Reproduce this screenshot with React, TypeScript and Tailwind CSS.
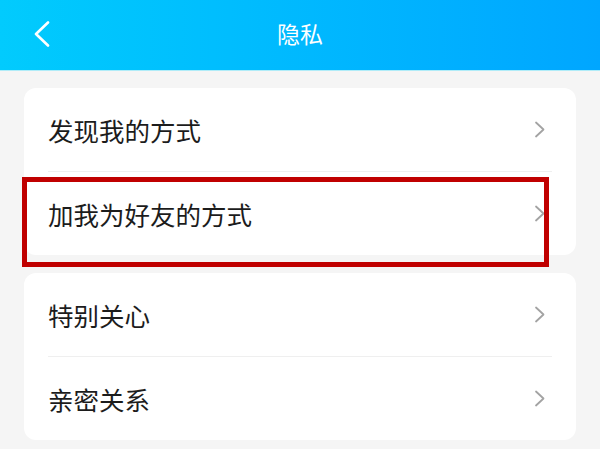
import React from "react";

const font = { fontFamily: '"Noto Sans CJK SC", "Noto Sans", sans-serif' };

function Chevron() {
  return (
    <svg width="12" height="17" viewBox="0 0 12 17" fill="none" className="shrink-0">
      <polyline points="2,1.5 9.5,8.5 2,15.5" stroke="#a3a3a3" strokeWidth="1.8" strokeLinecap="round" strokeLinejoin="round" />
    </svg>
  );
}

function Row({ label, divider, h }: { label: string; divider?: boolean; h: string }) {
  return (
    <div className={`mx-6 flex items-center justify-between pr-[6px] ${h} ${divider ? "border-b border-[#efefef]" : ""}`}>
      <span className="text-[25.5px] leading-none text-[#1c1c1c]">{label}</span>
      <Chevron />
    </div>
  );
}

export default function App() {
  return (
    <div className="relative w-[600px] h-[449px] overflow-hidden bg-[#f5f5f5]" style={font}>
      <div className="grid h-[71px] grid-cols-[1fr_auto_1fr] items-center border-b border-[#b0ecf8] bg-gradient-to-r from-[#02cbfd] to-[#00a6ff] pb-[3px]">
        <div className="pl-[34px]">
          <svg width="16" height="26" viewBox="0 0 16 26" fill="none">
            <polyline points="14,1.5 2,13 14,24.5" stroke="#ffffff" strokeWidth="2.6" strokeLinecap="round" strokeLinejoin="round" />
          </svg>
        </div>
        <div className="text-[23px] leading-none text-white">隐私</div>
        <div />
      </div>

      <div className="flex flex-col gap-[18px] px-6 pt-[17px]">
        <div className="rounded-[12px] bg-white">
          <Row label="发现我的方式" divider h="h-[84px]" />
          <Row label="加我为好友的方式" h="h-[83px]" />
        </div>
        <div className="rounded-[12px] bg-white">
          <Row label="特别关心" divider h="h-[84px]" />
          <Row label="亲密关系" h="h-[83px]" />
        </div>
      </div>

      <div className="pointer-events-none absolute left-[22px] top-[177px] h-[90px] w-[527px] border-[5px] border-[#c00000]" />
    </div>
  );
}
